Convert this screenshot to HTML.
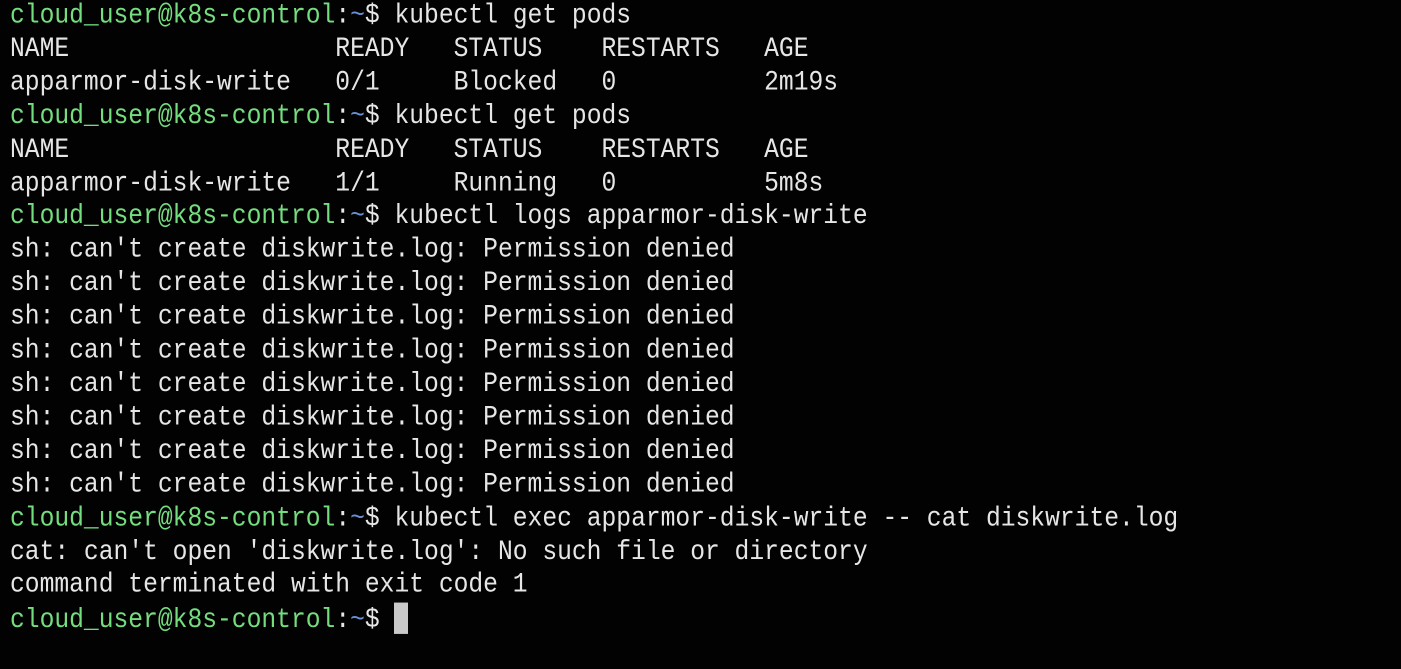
<!DOCTYPE html>
<html><head><meta charset="utf-8"><style>
html,body{margin:0;padding:0;background:#020203;width:1401px;height:669px;overflow:hidden}
pre{margin:0;position:absolute;left:10px;top:0px;font-family:"Liberation Mono","DejaVu Sans Mono",monospace;font-size:24.65px;line-height:29.91px;color:#e6e6e6;white-space:pre;transform:scaleY(1.12);transform-origin:0 0}
.g{color:#74dd7e}.b{color:#6b8fd6}
.c{display:inline-block;width:14px;height:28px;background:#c9c9c9;vertical-align:-6px}
</style></head><body>
<pre><span class="g">cloud_user@k8s-control</span>:<span class="b">~</span>$ kubectl get pods
NAME                  READY   STATUS    RESTARTS   AGE
apparmor-disk-write   0/1     Blocked   0          2m19s
<span class="g">cloud_user@k8s-control</span>:<span class="b">~</span>$ kubectl get pods
NAME                  READY   STATUS    RESTARTS   AGE
apparmor-disk-write   1/1     Running   0          5m8s
<span class="g">cloud_user@k8s-control</span>:<span class="b">~</span>$ kubectl logs apparmor-disk-write
sh: can't create diskwrite.log: Permission denied
sh: can't create diskwrite.log: Permission denied
sh: can't create diskwrite.log: Permission denied
sh: can't create diskwrite.log: Permission denied
sh: can't create diskwrite.log: Permission denied
sh: can't create diskwrite.log: Permission denied
sh: can't create diskwrite.log: Permission denied
sh: can't create diskwrite.log: Permission denied
<span class="g">cloud_user@k8s-control</span>:<span class="b">~</span>$ kubectl exec apparmor-disk-write -- cat diskwrite.log
cat: can't open 'diskwrite.log': No such file or directory
command terminated with exit code 1
<span class="g">cloud_user@k8s-control</span>:<span class="b">~</span>$ <span class="c"></span></pre>
</body></html>
